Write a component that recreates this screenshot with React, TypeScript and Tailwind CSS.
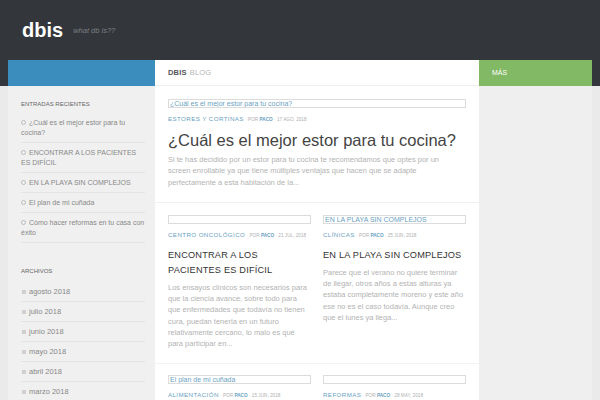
import type { ReactNode } from 'react'

const RECENT = [
  '¿Cuál es el mejor estor para tu cocina?',
  'ENCONTRAR A LOS PACIENTES ES DIFÍCIL',
  'EN LA PLAYA SIN COMPLEJOS',
  'El plan de mi cuñada',
  'Cómo hacer reformas en tu casa con éxito',
] as const

const ARCHIVES = ['agosto 2018', 'julio 2018', 'junio 2018', 'mayo 2018', 'abril 2018', 'marzo 2018', 'febrero 2018'] as const

export default function App() {
  return (
    <div className="h-[400px] w-[600px] overflow-hidden bg-[#eaeaea] font-['Liberation_Sans',Arial,sans-serif]">
      <header className="flex h-[60px] items-center bg-[#33363b] pl-[22px]">
        <span className="text-[20px] font-bold leading-none text-white">dbis</span>
        <span className="ml-[10px] mt-[2px] text-[7.5px] italic text-[#7d7f82]">what db is??</span>
      </header>
      <div className="bg-[linear-gradient(#33363b_26px,transparent_26px)] px-[8px]">
        <div className="flex">
          <LeftSidebar />
          <Main />
          <RightSidebar />
        </div>
      </div>
    </div>
  )
}

function LeftSidebar() {
  return (
    <aside className="w-[147px] shrink-0 bg-[#f0f0f0]">
      <div className="h-[26px] bg-[#3b8dbd]" />
      <div className="pl-[13px] pr-[10px] pt-[14px]">
        <WidgetTitle>Entradas recientes</WidgetTitle>
        <ul className="mt-[5px]">
          {RECENT.map((t) => (
            <li key={t} className="border-b border-[#e4e4e4] pb-[4px] pt-[5px] text-[7px] leading-[10px] text-[#888]">
              <span className="mr-[3px] inline-block h-[5px] w-[5px] rounded-full border border-[#bbb] align-[0px]" />
              {t}
            </li>
          ))}
        </ul>
        <div className="mt-[24px]">
          <WidgetTitle>Archivos</WidgetTitle>
        </div>
        <ul className="mt-[7px]">
          {ARCHIVES.map((t) => (
            <li key={t} className="border-b border-[#e4e4e4] pb-[4px] pt-[5px] text-[7.5px] leading-[10px] text-[#888]">
              <span className="mr-[3px] ml-[1px] inline-block h-[4px] w-[4px] bg-[#cfcfcf] align-[0px]" />
              {t}
            </li>
          ))}
        </ul>
      </div>
    </aside>
  )
}

function WidgetTitle({ children }: { children: ReactNode }) {
  return <h3 className="text-[6px] uppercase leading-[8px] text-[#666]">{children}</h3>
}

function Main() {
  return (
    <main className="w-[324px] shrink-0 bg-white">
      <div className="flex h-[26px] items-center border-b border-[#eeeeee] px-[13px] text-[7.5px] uppercase tracking-[0.2px]">
        <span className="font-semibold text-[#555]">dbis</span>
        <span className="ml-[3px] text-[#b5b5b5]">blog</span>
      </div>

      <article className="border-b border-[#f0f0f0] px-[13px] pb-[14px] pt-[13px]">
        <ThumbBox label="¿Cuál es el mejor estor para tu cocina?" />
        <Meta cat="Estores y cortinas" date="17 ago, 2018" />
        <h2 className="mt-[6px] text-[16.5px] leading-[20px] text-[#444]">¿Cuál es el mejor estor para tu cocina?</h2>
        <Excerpt
          className="mt-[4px]"
          lines={[
            'Si te has decidido por un estor para tu cocina te recomendamos que optes por un',
            'screen enrollable ya que tiene múltiples ventajas que hacen que se adapte',
            'perfectamente a esta habitación de la...',
          ]}
        />
      </article>

      <div className="grid grid-cols-2 gap-x-[12px] border-b border-[#f3f3f3] px-[13px] pb-[13px] pt-[12px]">
        <article>
          <ThumbBox label="" />
          <Meta cat="Centro oncológico" date="21 jul, 2018" />
          <PostTitle lines={['ENCONTRAR A LOS', 'PACIENTES ES DIFÍCIL']} />
          <Excerpt
            className="mt-[4px]"
            lines={[
              'Los ensayos clínicos son necesarios para',
              'que la ciencia avance, sobre todo para',
              'que enfermedades que todavía no tienen',
              'cura, puedan tenerla en un futuro',
              'relativamente cercano, lo malo es qué',
              'para participar en...',
            ]}
          />
        </article>
        <article>
          <ThumbBox label="EN LA PLAYA SIN COMPLEJOS" />
          <Meta cat="Clínicas" date="25 jun, 2018" />
          <PostTitle lines={['EN LA PLAYA SIN COMPLEJOS']} />
          <Excerpt
            className="mt-[4px]"
            lines={[
              'Parece que el verano no quiere terminar',
              'de llegar, otros años a estas alturas ya',
              'estaba completamente moreno y este año',
              'ese no es el caso todavía. Aunque creo',
              'que el lunes ya llega...',
            ]}
          />
        </article>
      </div>

      <div className="grid grid-cols-2 gap-x-[12px] px-[13px] pb-[14px] pt-[11px]">
        <article>
          <ThumbBox label="El plan de mi cuñada" />
          <Meta cat="Alimentación" date="15 jun, 2018" />
          <PostTitle lines={['EL PLAN DE MI CUÑADA']} />
        </article>
        <article>
          <ThumbBox label="" />
          <Meta cat="Reformas" date="28 may, 2018" />
          <PostTitle lines={['CÓMO HACER REFORMAS', 'EN TU CASA CON ÉXITO']} />
        </article>
      </div>
    </main>
  )
}

function ThumbBox({ label }: { label: string }) {
  return (
    <div className="h-[9px] overflow-hidden whitespace-nowrap border border-[#dcdcdc] px-[1px] text-[7px] leading-[7px] text-[#6a9fc2]">
      {label}
    </div>
  )
}

function Meta({ cat, date }: { cat: string; date: string }) {
  return (
    <p className="mt-[7px] whitespace-nowrap text-[4.7px] uppercase leading-[8px] text-[#b0b0b0]">
      <span className="text-[6.2px] tracking-[0.4px] text-[#6a9fc2]">{cat}</span>
      <span> · por </span>
      <span className="font-bold text-[#6a9fc2]">Paco</span>
      <span> · {date}</span>
    </p>
  )
}

function PostTitle({ lines }: { lines: string[] }) {
  return (
    <h2 className="mt-[8px] text-[9.2px] leading-[15px] tracking-[0.2px] text-[#333]">
      {lines.map((l) => (
        <span key={l} className="block whitespace-nowrap">
          {l}
        </span>
      ))}
    </h2>
  )
}

function Excerpt({ lines, className = '' }: { lines: string[]; className?: string }) {
  return (
    <p className={`text-[7.5px] leading-[11.3px] text-[#b3b3b3] ${className}`}>
      {lines.map((l) => (
        <span key={l} className="block whitespace-nowrap">
          {l}
        </span>
      ))}
    </p>
  )
}

function RightSidebar() {
  return (
    <aside className="w-[113px] shrink-0 bg-[#efefef]">
      <div className="flex h-[26px] items-center bg-[#82b965] pl-[13px] text-[7px] uppercase text-white">Más</div>
    </aside>
  )
}
